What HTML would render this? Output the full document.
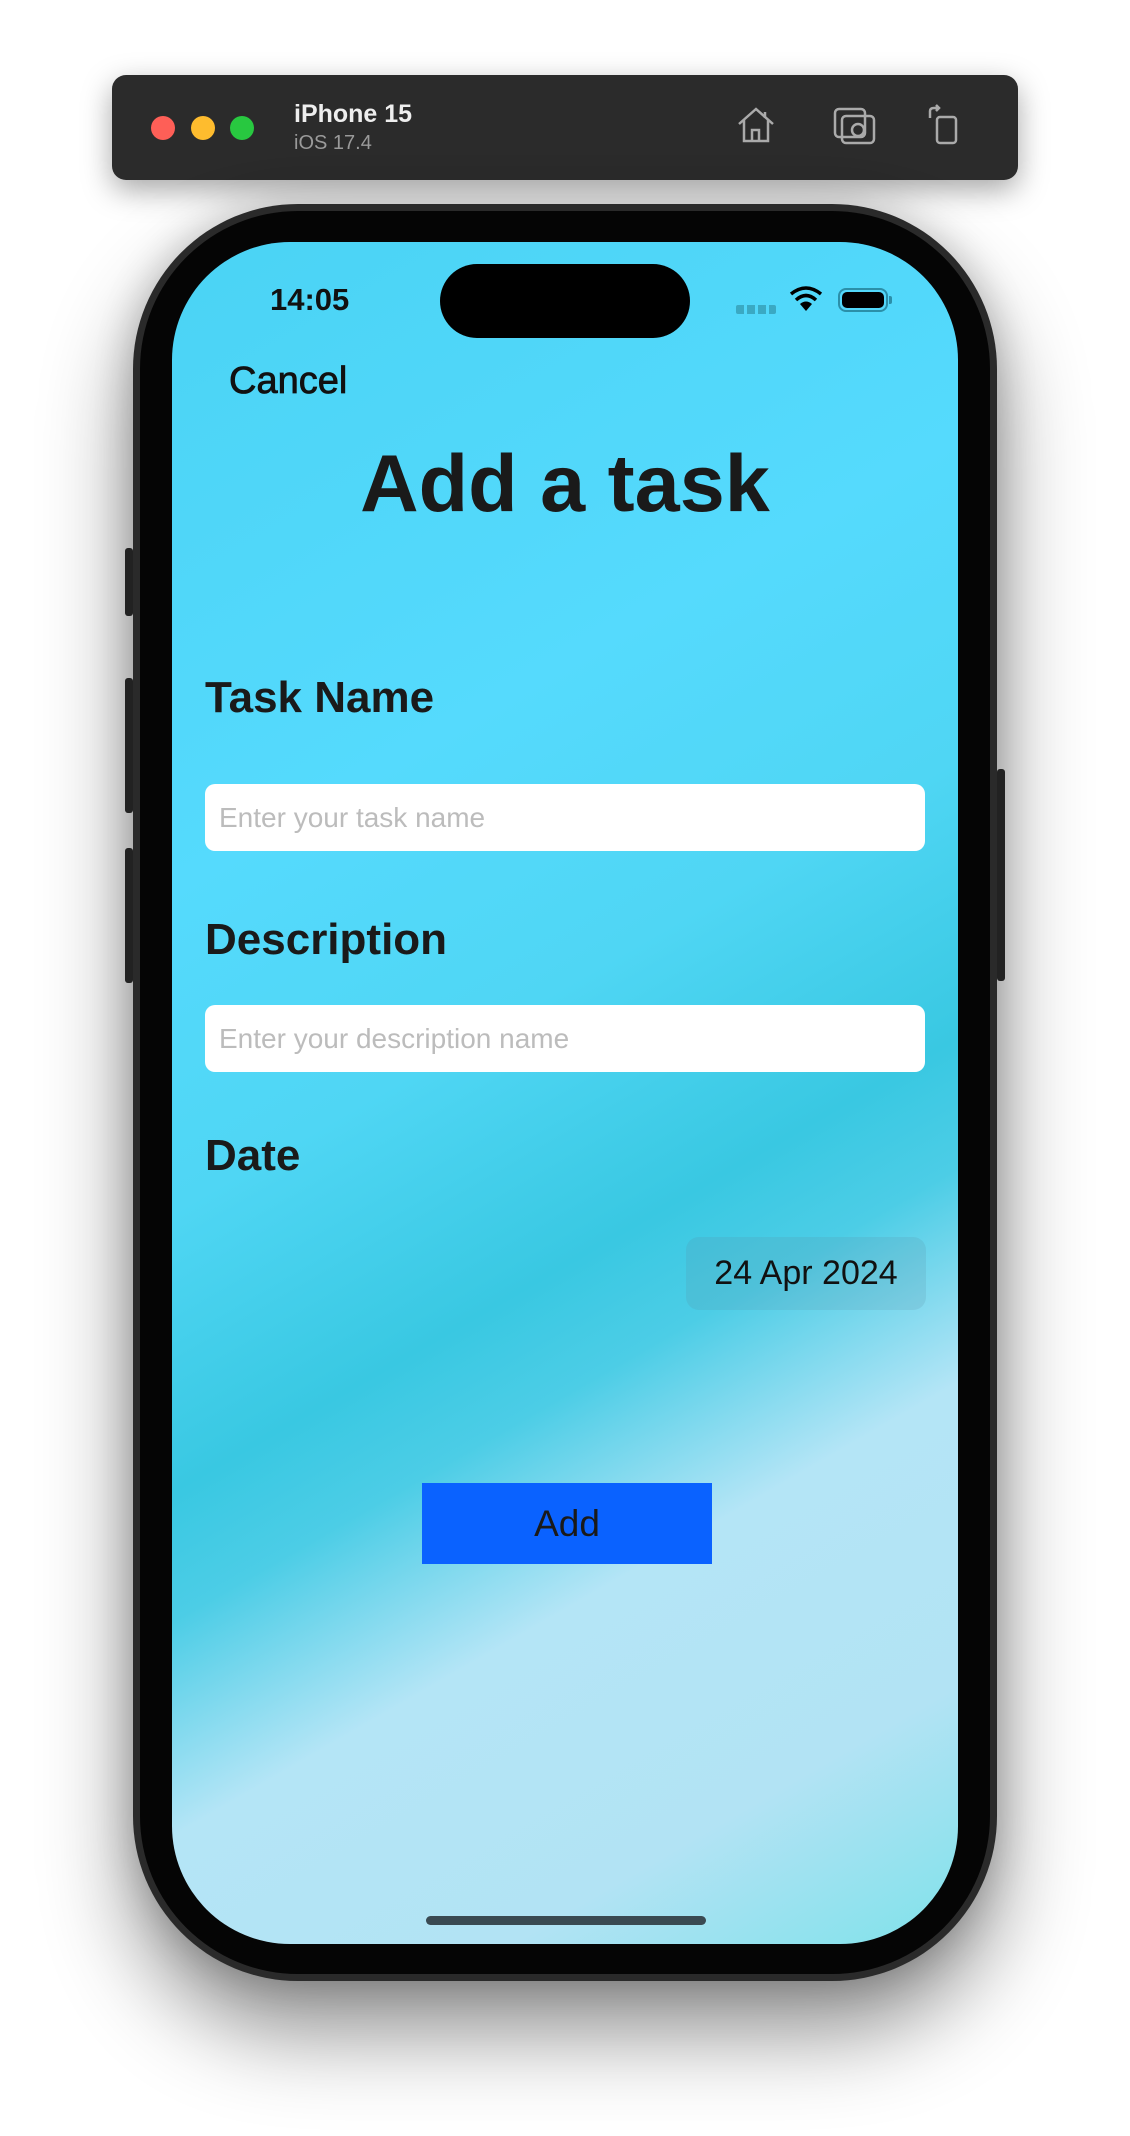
<!DOCTYPE html>
<html><head><meta charset="utf-8"><style>
*{margin:0;padding:0;box-sizing:border-box}
body{width:1130px;height:2136px;background:#fff;position:relative;overflow:hidden;font-family:"Liberation Sans",sans-serif}
.abs{position:absolute}
.toolbar{left:112px;top:75px;width:906px;height:105px;background:#2b2b2b;border-radius:14px;box-shadow:0 10px 30px rgba(0,0,0,.35)}
.dot{width:24px;height:24px;border-radius:50%;top:116px}
.phone{left:133px;top:204px;width:864px;height:1777px;border-radius:165px;background:#2a2a2a;box-shadow:0 50px 90px rgba(0,0,0,.45),0 0 40px rgba(0,0,0,.2)}
.bezel{left:140px;top:211px;width:850px;height:1763px;border-radius:158px;background:#050505}
.screen{left:172px;top:242px;width:786px;height:1702px;border-radius:118px;overflow:hidden;
background:linear-gradient(150deg,#4ad3f4 0%,#55dafd 30%,#4fd6f4 45%,#39c8e2 58%,#4ccde6 64%,#b4e5f6 74%,#b2e3f4 88%,#7fe1ea 100%)}
.lbl{position:absolute;left:33px;font-weight:bold;font-size:44px;color:#1a1a1a}
.inp{position:absolute;left:33px;width:720px;height:67px;background:#fff;border-radius:10px;font-size:28px;color:#bcbcbc;padding-left:14px;line-height:67px}
.side{background:#222;width:8px;border-radius:3px}
</style></head><body>
<div class="abs toolbar"></div>
<div class="abs dot" style="left:151px;background:#fe5f57"></div>
<div class="abs dot" style="left:191px;background:#febc2e"></div>
<div class="abs dot" style="left:230px;background:#28c840"></div>
<div class="abs" style="left:294px;top:100px;color:#eee;font-weight:bold;font-size:25px">iPhone 15</div>
<div class="abs" style="left:294px;top:132px;color:#9a9a9a;font-size:20px">iOS 17.4</div>
<svg class="abs" style="left:735px;top:106px" width="42" height="38" viewBox="0 0 42 38" fill="none" stroke="#aaa" stroke-width="2.5"><path d="M4 18 L21 3 L38 18 M9 14 V35 H33 V14 M17 35 V24 H24 V35"/><path d="M30 6 V12"/></svg>
<svg class="abs" style="left:833px;top:106px" width="44" height="40" viewBox="0 0 44 40" fill="none" stroke="#aaa" stroke-width="2.5"><rect x="2" y="3" width="30" height="28" rx="4"/><rect x="9" y="10" width="32" height="27" rx="4"/><circle cx="25" cy="24" r="6"/></svg>
<svg class="abs" style="left:925px;top:104px" width="38" height="42" viewBox="0 0 38 42" fill="none" stroke="#aaa" stroke-width="2.5"><rect x="12" y="13" width="19" height="26" rx="3"/><path d="M5 14 V7 Q5 4 9 4 H14 M11 1 L14 4 L11 7"/></svg>

<div class="abs phone"></div>
<div class="abs side" style="left:125px;top:548px;height:68px"></div>
<div class="abs side" style="left:125px;top:678px;height:135px"></div>
<div class="abs side" style="left:125px;top:848px;height:135px"></div>
<div class="abs side" style="left:997px;top:769px;height:212px"></div>
<div class="abs bezel"></div>
<div class="abs screen">
  <div class="abs" style="left:268px;top:22px;width:250px;height:74px;border-radius:37px;background:#000"></div>
  <div class="abs" style="left:98px;top:40px;font-size:31px;font-weight:bold;color:#111">14:05</div>
  <div class="abs" style="left:564px;top:63px;width:40px;height:9px;background:repeating-linear-gradient(90deg,#3aa9c3 0 8px,transparent 8px 11px);border-radius:2px"></div>
  <svg class="abs" style="left:617px;top:44px" width="34" height="26" viewBox="0 0 34 26"><path d="M17 25 L11 18 Q17 13 23 18 Z" fill="#000"/><path d="M7 14 Q17 5 27 14" stroke="#000" stroke-width="3.5" fill="none"/><path d="M2 8 Q17 -4 32 8" stroke="#000" stroke-width="3.5" fill="none"/></svg>
  <div class="abs" style="left:666px;top:46px;width:50px;height:24px;border:2.5px solid #2b8fa9;border-radius:8px;padding:2px"><div style="width:100%;height:100%;background:#000;border-radius:5px"></div></div>
  <div class="abs" style="left:717px;top:54px;width:3px;height:8px;background:#2b8fa9;border-radius:0 2px 2px 0"></div>
  <div class="abs" style="left:57px;top:118px;font-size:38px;color:#111;-webkit-text-stroke:0.8px #111">Cancel</div>
  <div class="abs" style="left:0;width:786px;text-align:center;top:196px;font-size:81px;font-weight:bold;color:#1a1a1a">Add a task</div>
  <div class="lbl" style="top:431px">Task Name</div>
  <div class="inp" style="top:542px">Enter your task name</div>
  <div class="lbl" style="top:673px">Description</div>
  <div class="inp" style="top:763px">Enter your description name</div>
  <div class="lbl" style="top:889px">Date</div>
  <div class="abs" style="left:514px;top:995px;width:240px;height:73px;border-radius:13px;background:rgba(90,140,160,.18);font-size:34px;color:#111;text-align:center;line-height:73px">24 Apr 2024</div>
  <div class="abs" style="left:250px;top:1241px;width:290px;height:81px;background:#0a62ff;font-size:37px;color:#1a1a1a;text-align:center;line-height:81px">Add</div>
  <div class="abs" style="left:254px;top:1674px;width:280px;height:9px;border-radius:5px;background:#3a4a52"></div>
</div>
</body></html>
